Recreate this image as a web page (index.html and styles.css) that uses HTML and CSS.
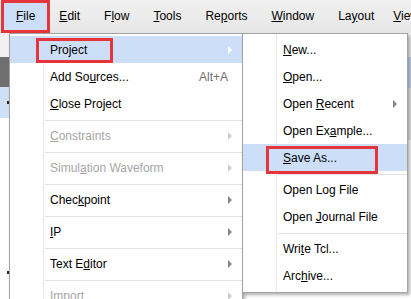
FILE: index.html
```html
<!DOCTYPE html>
<html lang="en">
<head>
    <meta charset="UTF-8">
    <title>Vivado - File menu</title>
    <link rel="stylesheet" href="styles.css">
</head>
<body>
    <div class="app">
        <nav class="menubar">
            <span class="menubar-item is-open"><u>F</u>ile</span>
            <span class="menubar-item"><u>E</u>dit</span>
            <span class="menubar-item">F<u>l</u>ow</span>
            <span class="menubar-item"><u>T</u>ools</span>
            <span class="menubar-item">Re<u>p</u>orts</span>
            <span class="menubar-item"><u>W</u>indow</span>
            <span class="menubar-item">La<u>y</u>out</span>
            <span class="menubar-item menubar-item--last"><u>V</u>iew</span>
        </nav>

        <div class="workspace">
            <div class="side side-left">
                <div class="strip strip-light"></div>
                <div class="strip strip-dark"></div>
                <div class="strip strip-selected"><i class="tick"></i></div>
                <div class="strip strip-white"><i class="tick"></i></div>
            </div>
            <div class="canvas"></div>
            <div class="side side-right">
                <div class="strip strip-light"></div>
                <div class="strip strip-blue"></div>
                <div class="strip strip-grey"></div>
                <div class="strip strip-white"></div>
            </div>
        </div>

        <!-- File menu -->
        <ul class="popup popup-file">
            <li class="item is-active">
                <span class="label">Pro<u>j</u>ect</span>
                <i class="arrow"></i>
                <span class="callout callout-project"></span>
            </li>
            <li class="item">
                <span class="label">Add So<u>u</u>rces...</span>
                <span class="key">Alt+A</span>
            </li>
            <li class="item"><span class="label"><u>C</u>lose Project</span></li>
            <li class="sep"></li>
            <li class="item is-disabled"><span class="label"><u>C</u>onstraints</span><i class="arrow"></i></li>
            <li class="sep"></li>
            <li class="item is-disabled"><span class="label">Simul<u>a</u>tion Waveform</span><i class="arrow"></i></li>
            <li class="sep"></li>
            <li class="item"><span class="label">Chec<u>k</u>point</span><i class="arrow"></i></li>
            <li class="sep"></li>
            <li class="item"><span class="label"><u>I</u>P</span><i class="arrow"></i></li>
            <li class="sep"></li>
            <li class="item"><span class="label">Text E<u>d</u>itor</span><i class="arrow"></i></li>
            <li class="sep"></li>
            <li class="item is-disabled"><span class="label">Import</span><i class="arrow"></i></li>
        </ul>

        <!-- Project submenu -->
        <ul class="popup popup-project">
            <li class="item"><span class="label"><u>N</u>ew...</span></li>
            <li class="item"><span class="label"><u>O</u>pen...</span></li>
            <li class="item"><span class="label">Open <u>R</u>ecent</span><i class="arrow"></i></li>
            <li class="item"><span class="label">Open Ex<u>a</u>mple...</span></li>
            <li class="item is-active">
                <span class="label"><u>S</u>ave As...</span>
                <span class="callout callout-save"></span>
            </li>
            <li class="sep"></li>
            <li class="item"><span class="label">Open Lo<u>g</u> File</span></li>
            <li class="item"><span class="label">Open <u>J</u>ournal File</span></li>
            <li class="sep"></li>
            <li class="item"><span class="label">Wri<u>t</u>e Tcl...</span></li>
            <li class="item"><span class="label">Arc<u>h</u>ive...</span></li>
        </ul>
    </div>
</body>
</html>
```

FILE: styles.css
```css
* {
    margin: 0;
    padding: 0;
    box-sizing: border-box;
}

body {
    font-family: 'Liberation Sans', Arial, sans-serif;
    font-size: 12px;
    color: #000;
    background: #fff;
    overflow: hidden;
}

u {
    text-decoration: underline;
    text-underline-offset: 1px;
}

.app {
    position: relative;
    width: 411px;
    height: 299px;
    overflow: hidden;
}

/* Menu bar */

.menubar {
    display: flex;
    height: 33px;
    padding: 3px 0 0 4px;
    background: linear-gradient(#f0f0f0, #e7e7e7);
}

.menubar-item {
    height: 27px;
    line-height: 27px;
    padding: 0 12px;
    white-space: nowrap;
}

.menubar-item--last {
    margin-left: -5px;
}

.menubar-item.is-open {
    background: #cddff8;
    outline: 3px solid #e5353b;
}

/* Background panels behind the menus */

.workspace {
    display: flex;
    height: 266px;
}

.side {
    display: flex;
    flex-direction: column;
}

.side-left {
    width: 9px;
}

.side-right {
    width: 3px;
}

.canvas {
    flex: 1;
    background: #fff;
}

.strip-light {
    height: 24px;
    background: #f1f1f1;
}

.strip-dark {
    height: 30px;
    background: #6f6f6f;
}

.strip-selected {
    height: 31px;
    background: #cfdff5;
    display: flex;
    align-items: center;
    justify-content: flex-end;
}

.strip-blue {
    height: 31px;
    background: #c4d6ef;
}

.strip-grey {
    height: 52px;
    background: #e7e7e7;
}

.strip-white {
    flex: 1;
    background: #fff;
    display: flex;
    justify-content: flex-end;
    padding-top: 153px;
}

.tick {
    width: 2px;
    height: 3px;
    background: #222;
}

/* Popup menus */

.popup {
    position: absolute;
    list-style: none;
    padding: 2px 0;
    border: 1px solid #a3a3a3;
    background: linear-gradient(to right, transparent 33px, #e6e6e6 33px, #e6e6e6 34px, transparent 34px), #fff;
    box-shadow: 2px 2px 3px rgba(0, 0, 0, 0.3);
}

.popup-file {
    top: 33px;
    left: 9px;
    width: 234px;
    height: 300px;
}

.popup-project {
    top: 33px;
    left: 242px;
    width: 166px;
    height: 260px;
}

.item {
    position: relative;
    display: flex;
    align-items: center;
    height: 27px;
    padding: 0 10px 0 40px;
    white-space: nowrap;
}

.item .label {
    flex: 1;
}

.item .key {
    color: #6e6e6e;
    margin-right: 4px;
}

.item.is-active {
    background: #cddff8;
}

.item.is-disabled {
    color: #a6a6a6;
}

.arrow {
    width: 0;
    height: 0;
    border-top: 4px solid transparent;
    border-bottom: 4px solid transparent;
    border-left: 4px solid #858585;
}

.item.is-active .arrow {
    border-left-color: #fff;
}

.item.is-disabled .arrow {
    border-left-color: #cdcdcd;
}

.sep {
    height: 5px;
    padding-top: 3px;
    margin-left: 35px;
}

.sep::after {
    content: '';
    display: block;
    height: 1px;
    background: #e2e2e2;
}

/* Red annotation boxes */

.callout {
    position: absolute;
    top: 2px;
    border: 3px solid #e5353b;
}

.callout-project {
    left: 26px;
    width: 77px;
    height: 25px;
}

.callout-save {
    left: 23px;
    width: 112px;
    height: 28px;
}
```
